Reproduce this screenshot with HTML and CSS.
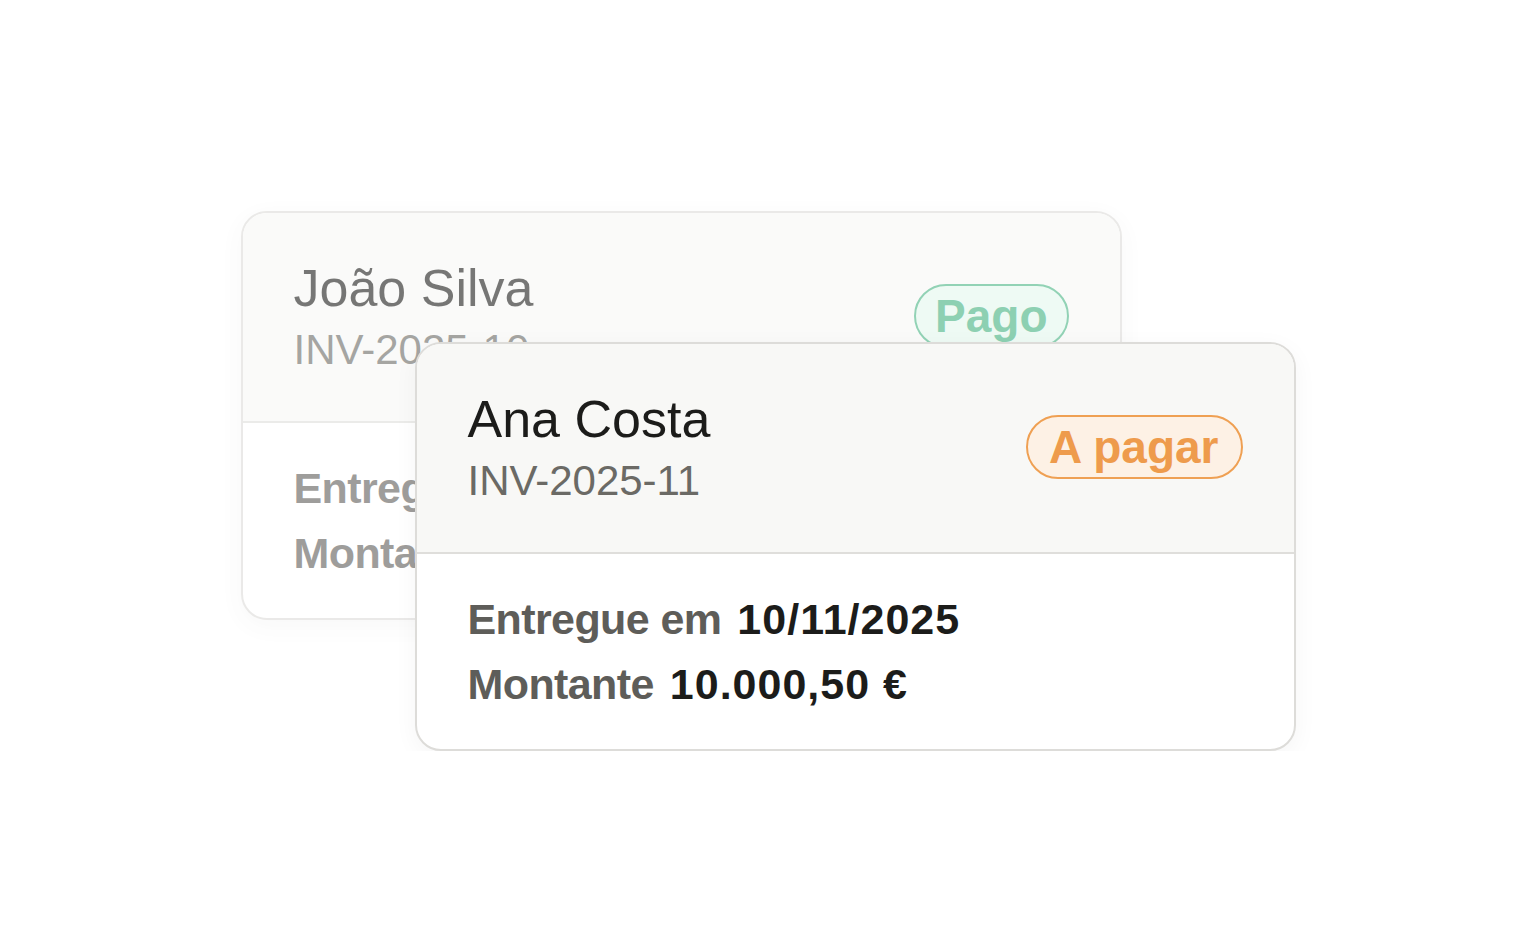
FILE: index.html
```html
<!DOCTYPE html>
<html lang="pt">
<head>
<meta charset="utf-8">
<title>Faturas</title>
<link rel="stylesheet" href="styles.css">
</head>
<body>
<main class="stage">
  <div class="stack">
    <article class="card card-back">
      <header class="card-head">
        <div class="who">
          <div class="name">João Silva</div>
          <div class="ref">INV-2025-10</div>
        </div>
        <span class="badge badge-paid">Pago</span>
      </header>
      <section class="card-body">
        <div class="row"><span class="label">Entregue em</span><span class="value">03/11/2025</span></div>
        <div class="row"><span class="label">Montante</span><span class="value">2.450,00 €</span></div>
      </section>
    </article>
    <article class="card card-front">
      <header class="card-head">
        <div class="who">
          <div class="name">Ana Costa</div>
          <div class="ref">INV-2025-11</div>
        </div>
        <span class="badge badge-due">A pagar</span>
      </header>
      <section class="card-body">
        <div class="row"><span class="label">Entregue em</span><span class="value">10/11/2025</span></div>
        <div class="row"><span class="label">Montante</span><span class="value">10.000,50 €</span></div>
      </section>
    </article>
  </div>
</main>
</body>
</html>
```

FILE: styles.css
```css
* { box-sizing: border-box; }

html, body {
  margin: 0;
  padding: 0;
  background: #ffffff;
}

body {
  font-family: "Liberation Sans", Arial, sans-serif;
  color: #1c1c1a;
}

.stage {
  display: flex;
  justify-content: center;
  padding-top: 211px;
}

.stack {
  display: grid;
  grid-template-columns: auto;
  align-items: start;
}

.card {
  grid-area: 1 / 1;
  align-self: start;
  width: 881px;
  border: 2px solid #dddcd9;
  border-radius: 26px;
  background: #ffffff;
  overflow: hidden;
  box-shadow: 0 6px 24px rgba(0, 0, 0, 0.045);
}

.card-back {
  opacity: 0.6;
}

.card-front {
  position: relative;
  z-index: 1;
  margin-left: 174px;
  margin-top: 131px;
}

.card-head {
  display: flex;
  align-items: center;
  justify-content: space-between;
  padding: 44px 51px 46px 51px;
  background: #f8f8f6;
  border-bottom: 2px solid #dfdedb;
}

.name {
  font-size: 52px;
  line-height: 62px;
  color: #1c1c1a;
}

.ref {
  margin-top: 6px;
  font-size: 42px;
  line-height: 50px;
  color: #6b6a65;
}

.badge {
  display: inline-flex;
  align-items: center;
  height: 64px;
  padding: 0 19px;
  border-radius: 32px;
  border: 2px solid;
  font-size: 46px;
  font-weight: 700;
  line-height: 60px;
}

.badge-due {
  padding: 0 22px 0 21px;
  color: #ee9b4c;
  border-color: #efa053;
  background: #fdf1e5;
}

.badge-paid {
  color: #43b17f;
  border-color: #4ab585;
  background: #e3f7ed;
}

.card-body {
  padding: 33px 51px 32px 51px;
}

.row {
  display: flex;
  gap: 16px;
  font-size: 43px;
  line-height: 65px;
  font-weight: 700;
}

.label {
  color: #5e5d59;
  letter-spacing: -0.6px;
}

.value {
  color: #1c1c1a;
  letter-spacing: 1px;
}
```
